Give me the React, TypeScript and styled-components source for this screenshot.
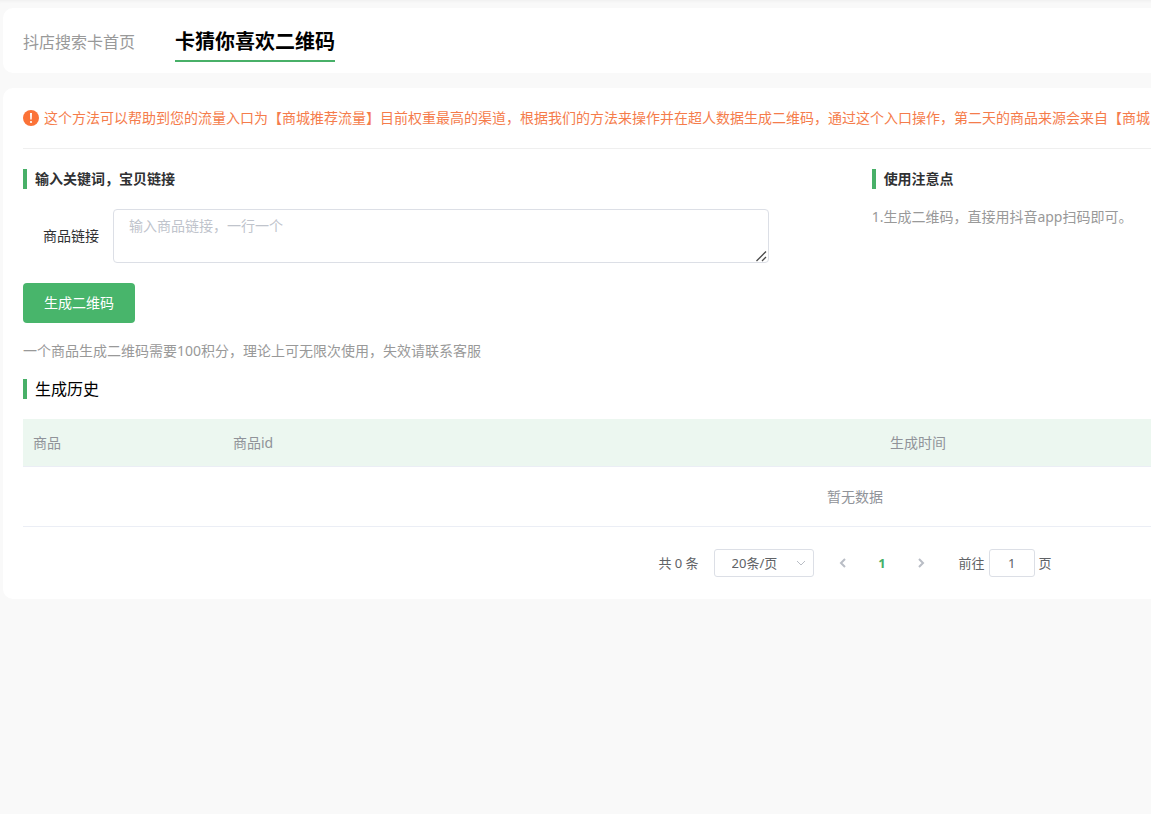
import React, { useState } from "react";
import styled, { createGlobalStyle } from "styled-components";

const GlobalStyle = createGlobalStyle`
  * { box-sizing: border-box; }
  html, body { margin: 0; background: #f9f9f9; }
  body {
    overflow-x: hidden;
    color: #303133;
    font-family: "Noto Sans", "Noto Sans CJK SC", sans-serif;
    font-size: 14px;
    line-height: 20px;
  }
  button, input, select, textarea { font: inherit; color: inherit; }
`;

const Page = styled.div`
  min-width: 1707px;
  padding: 8px 0 20px 3px;
  box-shadow: inset 0 3px 3px -2px #eeeeee;
`;

const Card = styled.section`
  background: #fff;
  border-radius: 10px;
  padding: 0 20px;
`;

const Tabs = styled(Card).attrs({ as: "nav" })`
  display: flex;
  align-items: flex-start;
  gap: 40px;
  height: 65px;
  margin-bottom: 15px;
  padding-top: 19px;
`;

const Tab = styled.a<{ $active?: boolean }>`
  line-height: 30px;
  padding-bottom: 3px;
  text-decoration: none;
  font-size: ${(p) => (p.$active ? 20 : 16)}px;
  font-weight: ${(p) => (p.$active ? 700 : 400)};
  color: ${(p) => (p.$active ? "#000" : "#999")};
  border-bottom: 2px solid ${(p) => (p.$active ? "#48b068" : "transparent")};
`;

const Warning = styled.p`
  display: flex;
  align-items: center;
  gap: 5px;
  height: 61px;
  margin: 0 0 20px;
  border-bottom: 1px solid #efefef;
  color: #f57c4b;
  white-space: nowrap;

  svg { flex: none; }
`;

const Columns = styled.div`
  display: grid;
  grid-template-columns: 51% 1fr;
`;

const SectionTitle = styled.h2<{ $large?: boolean }>`
  margin: 0 0 20px;
  padding-left: 8px;
  border-left: 4px solid #48b068;
  line-height: 20px;
  font-size: ${(p) => (p.$large ? 16 : 14)}px;
  font-weight: ${(p) => (p.$large ? 400 : 700)};
  color: ${(p) => (p.$large ? "#000" : "#303133")};
`;

const Field = styled.div`
  display: flex;
  align-items: center;
  margin: 0 103px 20px 20px;
`;

const FieldLabel = styled.label`
  width: 70px;
  flex: none;
`;

const InputWrap = styled.div`
  position: relative;
  flex: 1;
`;

const Grip = styled.svg`
  position: absolute;
  right: 1px;
  bottom: 1px;
  pointer-events: none;
`;

const LinkInput = styled.textarea`
  display: block;
  width: 100%;
  height: 54px;
  padding: 6px 15px;
  border: 1px solid #dcdfe6;
  border-radius: 4px;
  outline: none;
  background: #fff;
  line-height: 20px;
  resize: vertical;

  &::placeholder { color: #c0c4cc; }
  &::-webkit-resizer { background: transparent; }
`;

const PrimaryButton = styled.button`
  display: block;
  height: 40px;
  padding: 0 21px;
  border: 0;
  border-radius: 4px;
  background: #48b56b;
  color: #fff;
  cursor: pointer;
`;

const Note = styled.p<{ $spaced?: boolean }>`
  margin: ${(p) => (p.$spaced ? "18px 0" : "-2px 0 0")};
  color: #999;
`;

const Table = styled.table`
  width: 100%;
  table-layout: fixed;
  border-collapse: separate;
  border-spacing: 0;
  color: #909399;
`;

const HeadCell = styled.th<{ $width?: number }>`
  width: ${(p) => (p.$width ? `${p.$width}px` : "auto")};
  height: 48px;
  padding: 0 10px;
  background: #ecf7f0;
  border-bottom: 1px solid #ebeef5;
  text-align: left;
  font-weight: 400;
`;

const EmptyCell = styled.td`
  height: 60px;
  padding: 0;
  border-bottom: 1px solid #ebeef5;
  text-align: center;
`;

const Pagination = styled.div`
  display: flex;
  align-items: center;
  justify-content: center;
  padding: 22px 0;
  color: #606266;
  font-size: 13px;
  line-height: 28px;
`;

const SizeWrap = styled.div`
  display: flex;
  align-items: center;
  width: 100px;
  height: 28px;
  margin: 0 10px 0 15px;
  border: 1px solid #dcdfe6;
  border-radius: 3px;

  svg { flex: none; margin: 0 5px 0 -19px; pointer-events: none; }
`;

const SizeSelect = styled.select`
  width: 100%;
  height: 26px;
  padding: 0 20px 0 17px;
  border: 0;
  outline: none;
  background: transparent;
  line-height: 20px;
  appearance: none;
`;

const PageButton = styled.button<{ $active?: boolean }>`
  display: flex;
  align-items: center;
  justify-content: center;
  width: 39px;
  height: 28px;
  padding: 0;
  border: 0;
  background: transparent;
  font-weight: 700;
  color: ${(p) => (p.$active ? "#48b068" : "#b4b8c0")};
`;

const Jump = styled.label`
  display: flex;
  align-items: center;
  margin-left: 18px;
`;

const JumpInput = styled.input`
  width: 46px;
  height: 28px;
  margin: 0 4px;
  padding: 0;
  border: 1px solid #dcdfe6;
  border-radius: 3px;
  outline: none;
  text-align: center;
`;

const Chevron = ({ d, width = 2 }: { d: string; width?: number }) => (
  <svg width="14" height="14" viewBox="0 0 14 14" fill="none" stroke="#b9bdc5" strokeWidth={width} aria-hidden="true">
    <path d={d} />
  </svg>
);

export default function App() {
  const [links, setLinks] = useState("");
  const [page, setPage] = useState("1");

  return (
    <Page>
      <GlobalStyle />
      <Tabs>
        <Tab href="#home">抖店搜索卡首页</Tab>
        <Tab href="#qrcode" $active>卡猜你喜欢二维码</Tab>
      </Tabs>

      <Card as="main">
        <Warning>
          <svg width="16" height="16" viewBox="0 0 16 16" aria-hidden="true">
            <circle cx="8" cy="8" r="8" fill="#fb7237" />
            <path d="M7 3h2l-.3 6.6H7.3z" fill="#fff" />
            <circle cx="8" cy="12" r="1.1" fill="#fff" />
          </svg>
          这个方法可以帮助到您的流量入口为【商城推荐流量】目前权重最高的渠道，根据我们的方法来操作并在超人数据生成二维码，通过这个入口操作，第二天的商品来源会来自【商城
        </Warning>

        <Columns>
          <div>
            <SectionTitle>输入关键词，宝贝链接</SectionTitle>
            <Field>
              <FieldLabel htmlFor="links">商品链接</FieldLabel>
              <InputWrap>
                <LinkInput
                  id="links"
                  placeholder="输入商品链接，一行一个"
                  value={links}
                  onChange={(e) => setLinks(e.target.value)}
                />
                <Grip width="12" height="12" viewBox="0 0 12 12" stroke="#4a4a4a" strokeWidth="1.3" aria-hidden="true">
                  <path d="M.5 11L10 1.5M6 11l4-4" />
                </Grip>
              </InputWrap>
            </Field>
            <PrimaryButton type="button">生成二维码</PrimaryButton>
            <Note $spaced>一个商品生成二维码需要100积分，理论上可无限次使用，失效请联系客服</Note>
          </div>
          <div>
            <SectionTitle>使用注意点</SectionTitle>
            <Note>1.生成二维码，直接用抖音app扫码即可。</Note>
          </div>
        </Columns>

        <SectionTitle $large>生成历史</SectionTitle>
        <Table>
          <thead>
            <tr>
              <HeadCell $width={200}>商品</HeadCell>
              <HeadCell>商品id</HeadCell>
              <HeadCell>生成时间</HeadCell>
              <HeadCell $width={150} />
            </tr>
          </thead>
          <tbody>
            <tr>
              <EmptyCell colSpan={4}>暂无数据</EmptyCell>
            </tr>
          </tbody>
        </Table>

        <Pagination>
          <span>共 0 条</span>
          <SizeWrap>
            <SizeSelect aria-label="每页条数" defaultValue="20">
              <option value="20">20条/页</option>
            </SizeSelect>
            <Chevron d="M3 5l4 4 4-4" width={1} />
          </SizeWrap>
          <PageButton type="button" aria-label="上一页"><Chevron d="M9 3L5 7l4 4" /></PageButton>
          <PageButton type="button" $active>1</PageButton>
          <PageButton type="button" aria-label="下一页"><Chevron d="M5 3l4 4-4 4" /></PageButton>
          <Jump>
            前往
            <JumpInput value={page} onChange={(e) => setPage(e.target.value)} />
            页
          </Jump>
        </Pagination>
      </Card>
    </Page>
  );
}
